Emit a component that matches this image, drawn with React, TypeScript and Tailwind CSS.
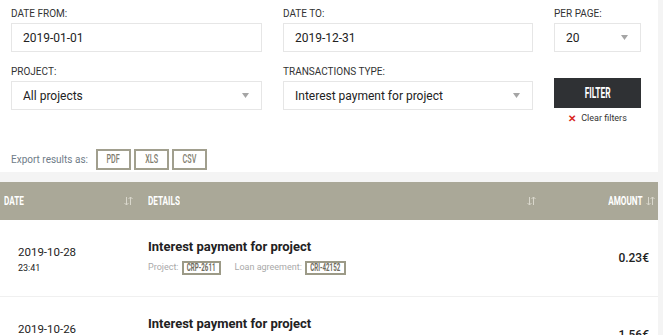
import React from "react";

// the condensed display face is faked by squeezing Roboto horizontally
function Cond({ children, k = "scale-x-[0.65]", origin = "origin-center" }: { children: React.ReactNode; k?: string; origin?: string }) {
  return <span className={`inline-block whitespace-nowrap ${k} ${origin}`}>{children}</span>;
}

function Caret() {
  return (
    <svg width="7" height="5" viewBox="0 0 7 5" className="shrink-0">
      <path d="M0 0 H7 L3.5 5 Z" fill="#a5a5a5" />
    </svg>
  );
}

function SortIcon() {
  return (
    <svg width="9" height="10" viewBox="0 0 9 10" className="shrink-0">
      <path d="M2.5 1 V9 M0.5 7 L2.5 9 L4.5 7" stroke="#d9d7cc" strokeWidth="1" fill="none" />
      <path d="M6.5 9 V1 M4.5 3 L6.5 1 L8.5 3" stroke="#d9d7cc" strokeWidth="1" fill="none" />
    </svg>
  );
}

function Label({ children }: { children: React.ReactNode }) {
  return <div className="text-[10px] leading-[12px] text-[#333] uppercase mb-[3px]">{children}</div>;
}

function Field({ value, select }: { value: string; select?: boolean }) {
  return (
    <div className="h-[29px] border border-[#e6e6e6] bg-white flex items-center justify-between pl-[11px] pr-[12px] text-[12px] text-[#222]">
      <span>{value}</span>
      {select && <Caret />}
    </div>
  );
}

function Badge({ children, w }: { children: React.ReactNode; w: string }) {
  return (
    <span
      className={`inline-flex items-center justify-center h-[14px] ${w} border-2 border-[#9c9a87] text-[10px] font-bold text-[#6f6d62] leading-none`}
    >
      <Cond k="scale-x-[0.62]">{children}</Cond>
    </span>
  );
}

const rows = [
  { date: "2019-10-28", time: "23:41", project: "CRP-2611", loan: "CRI-42152", amount: "0.23€" },
  { date: "2019-10-26", time: "12:10", project: "CRP-2598", loan: "CRI-41877", amount: "1.56€" },
];

export default function App() {
  return (
    <div className="min-h-screen bg-[#f4f4f4] font-['Roboto',sans-serif]">
      <div className="w-[658px]">
        {/* Filters */}
        <div className="bg-white h-[172px] pl-[11px] pt-[8px]">
          <div className="grid grid-cols-[251px_250px_87px] gap-x-[21px]">
            <div>
              <Label>Date from:</Label>
              <Field value="2019-01-01" />
            </div>
            <div>
              <Label>Date to:</Label>
              <Field value="2019-12-31" />
            </div>
            <div>
              <Label>Per page:</Label>
              <Field value="20" select />
            </div>

            <div className="mt-[14px]">
              <Label>Project:</Label>
              <Field value="All projects" select />
            </div>
            <div className="mt-[14px]">
              <Label>Transactions type:</Label>
              <Field value="Interest payment for project" select />
            </div>
            <div className="mt-[26px] flex flex-col items-center">
              <button className="w-full h-[30px] bg-[#2f3134] text-white text-[14px] font-bold leading-none">
                <Cond k="scale-x-[0.6]">FILTER</Cond>
              </button>
              <div className="mt-[4px] flex items-center gap-[5px] text-[9px] text-[#333]">
                <span className="text-[#d9261c] text-[10px] leading-none font-bold">✕</span>
                <span>Clear filters</span>
              </div>
            </div>
          </div>

          <div className="mt-[23px] flex items-center">
            <span className="text-[10px] text-[#6f7c88] mr-[8px]">Export results as:</span>
            <div className="flex gap-[3px]">
              {["PDF", "XLS", "CSV"].map((t) => (
                <span
                  key={t}
                  className="w-[35px] h-[21px] border-2 border-[#a19f8e] flex items-center justify-center text-[12px] font-medium text-[#7f7d6e]"
                >
                  <Cond k="scale-x-[0.6]">{t}</Cond>
                </span>
              ))}
            </div>
          </div>
        </div>

        {/* Table */}
        <div className="mt-[10px]">
          <div className="h-[38px] bg-[#aaa898] flex items-center text-white text-[12px] font-bold">
            <div className="w-[140px] pl-[4px] pr-[7px] flex items-center justify-between">
              <Cond k="scale-x-[0.68]" origin="origin-left">DATE</Cond>
              <SortIcon />
            </div>
            <div className="flex-1 pl-[8px] pr-[12px] flex items-center justify-between">
              <Cond k="scale-x-[0.68]" origin="origin-left">DETAILS</Cond>
              <SortIcon />
            </div>
            <div className="w-[110px] pr-[3px] flex items-center justify-end gap-[4px]">
              <Cond k="scale-x-[0.68]" origin="origin-right">AMOUNT</Cond>
              <SortIcon />
            </div>
          </div>

          {rows.map((r) => (
            <div key={r.date} className="h-[77px] bg-white border-b border-[#f0f0f0] flex">
              <div className="w-[140px] pl-[18px] pt-[25px]">
                <div className="text-[11.5px] leading-[14px] text-[#222]">{r.date}</div>
                <div className="text-[9px] leading-[11px] mt-[4px] text-[#222]">{r.time}</div>
              </div>
              <div className="flex-1 pl-[8px] pt-[19px]">
                <div className="text-[13px] leading-[16px] font-bold text-[#222]">Interest payment for project</div>
                <div className="mt-[6px] flex items-center text-[9px] text-[#a9a9a9]">
                  <span className="mr-[3px]">Project:</span>
                  <Badge w="w-[39px]">{r.project}</Badge>
                  <span className="ml-[14px] mr-[3px]">Loan agreement:</span>
                  <Badge w="w-[41px]">{r.loan}</Badge>
                </div>
              </div>
              <div className="w-[110px] pr-[9px] pt-[31px] text-right text-[12px] leading-[14px] font-medium text-[#222]">
                {r.amount}
              </div>
            </div>
          ))}
        </div>
      </div>
    </div>
  );
}
